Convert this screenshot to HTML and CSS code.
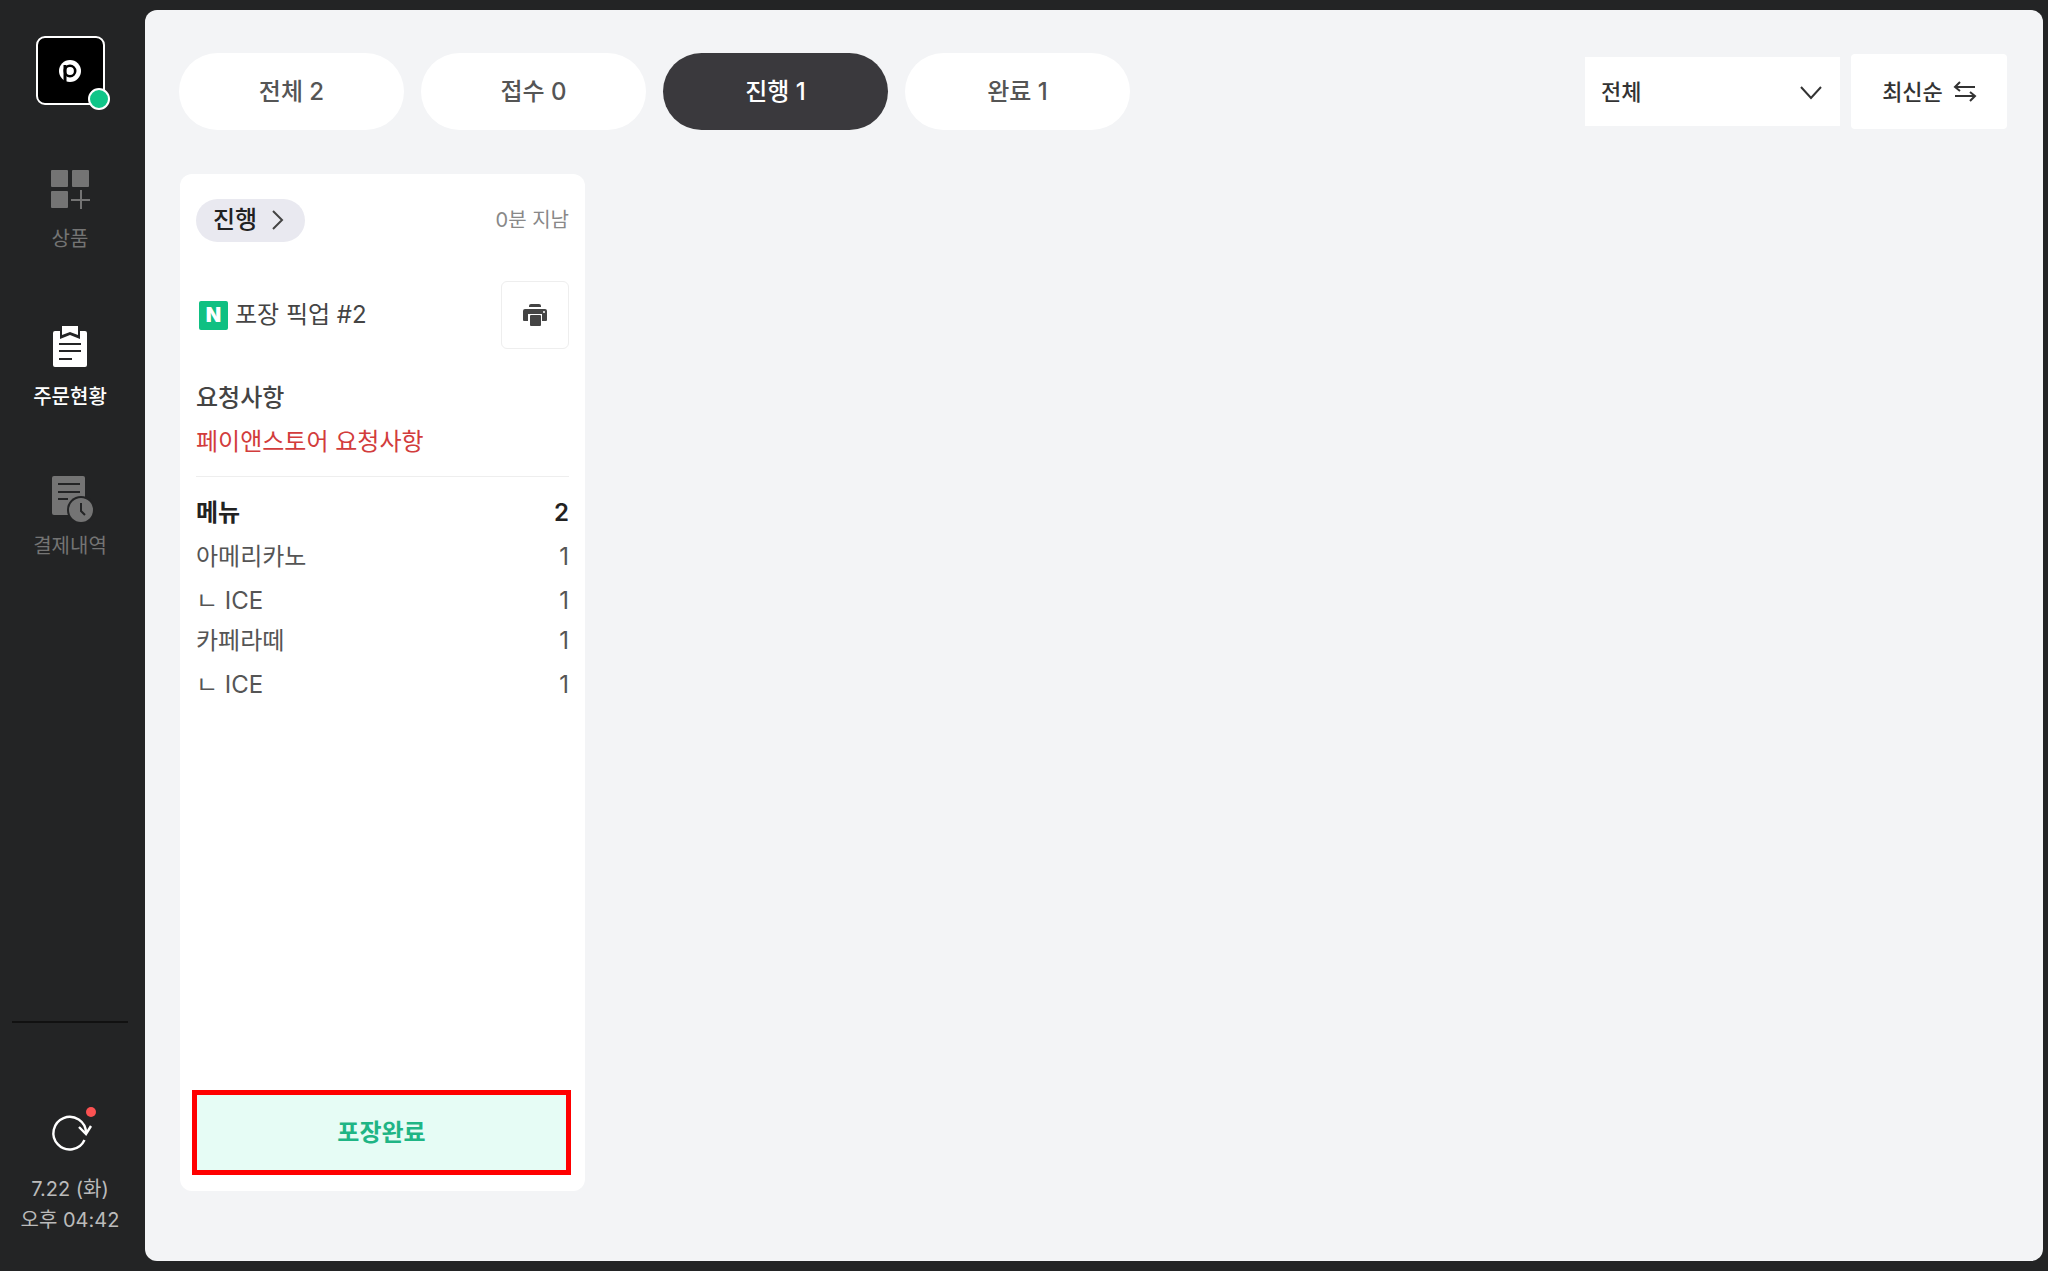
FILE: index.html
```html
<!DOCTYPE html>
<html lang="ko">
<head>
    <meta charset="UTF-8">
    <meta name="viewport" content="width=device-width, initial-scale=1.0">
    <title>주문현황</title>
    <link rel="stylesheet" href="styles.css">
</head>
<body>
    <div class="app">
        <aside class="sidebar">
            <a href="#" class="logo" aria-label="홈">
                <svg width="24" height="24" viewBox="0 0 24 24">
                    <circle cx="12" cy="12" r="11" fill="#fff"/>
                    <circle cx="12" cy="12" r="5.2" fill="none" stroke="#000" stroke-width="2.6"/>
                    <rect x="5.5" y="6" width="3" height="17" fill="#000"/>
                </svg>
                <span class="status-dot"></span>
            </a>

            <nav class="nav-menu">
                <a href="#" class="nav-link">
                    <svg width="42" height="44" viewBox="0 0 42 44">
                        <g fill="#747474">
                            <rect x="2" y="2" width="17" height="17" rx="1"/>
                            <rect x="23" y="2" width="17" height="17" rx="1"/>
                            <rect x="2" y="23" width="17" height="17" rx="1"/>
                        </g>
                        <path d="M32 22v19M22 32h19" stroke="#747474" stroke-width="2"/>
                    </svg>
                    <span>상품</span>
                </a>
                <a href="#" class="nav-link active">
                    <svg width="42" height="51" viewBox="0 -5 42 51">
                        <path d="M6 7h5v8l10-4 10 4V7h5a2 2 0 0 1 2 2v32a2 2 0 0 1-2 2H6a2 2 0 0 1-2-2V9a2 2 0 0 1 2-2z" fill="#fff"/>
                        <path d="M13 2h16v9l-8-3-8 3z" fill="#fff"/>
                        <path d="M10 20h22M10 27h22M10 35h13" stroke="#232425" stroke-width="2"/>
                    </svg>
                    <span>주문현황</span>
                </a>
                <a href="#" class="nav-link">
                    <svg width="42" height="42" viewBox="0 2 42 42">
                        <rect x="3" y="1" width="33" height="39" rx="2" fill="#747474"/>
                        <path d="M9 9h22M9 17h22M9 24h10" stroke="#232425" stroke-width="2"/>
                        <circle cx="32" cy="35" r="14" fill="#232425"/>
                        <circle cx="32" cy="35" r="12" fill="#747474"/>
                        <path d="M32 28v8l4 4" fill="none" stroke="#232425" stroke-width="2"/>
                    </svg>
                    <span>결제내역</span>
                </a>
            </nav>

            <div class="sidebar-footer">
                <button type="button" class="refresh-button" aria-label="새로고침">
                    <svg width="46" height="46" viewBox="0 0 46 46" fill="none" stroke="#fff" stroke-width="2.4">
                        <path d="M37.500 30a16.300 16.300 0 1 1 1.500-7"/>
                        <path d="M32 17l7 7 5-8"/>
                        <circle cx="44" cy="2" r="5" fill="#fb5252" stroke="none"/>
                    </svg>
                </button>
                <p class="clock">7.22 (화)<br>오후 04:42</p>
            </div>
        </aside>

        <main class="main">
            <div class="toolbar">
                <div class="tabs">
                    <button type="button" class="tab">전체 2</button>
                    <button type="button" class="tab">접수 0</button>
                    <button type="button" class="tab active">진행 1</button>
                    <button type="button" class="tab">완료 1</button>
                </div>
                <div class="filters">
                    <div class="select-box">
                        <select class="filter-select" aria-label="주문 유형">
                            <option>전체</option>
                        </select>
                        <svg class="select-arrow" width="24" height="16" viewBox="0 0 24 16" fill="none" stroke="#333" stroke-width="2">
                            <path d="M2 2l10 11L22 2"/>
                        </svg>
                    </div>
                    <button type="button" class="sort-button">
                        최신순
                        <svg width="22" height="22" viewBox="0 0 22 22" fill="none" stroke="#333" stroke-width="2">
                            <path d="M21 6H1M6 1L1 6l5 4M1 15h20M16 11l5 4-5 5"/>
                        </svg>
                    </button>
                </div>
            </div>

            <div class="orders">
                <article class="order-card">
                    <div class="card-row card-header">
                        <button type="button" class="state-button">
                            진행
                            <svg width="14" height="20" viewBox="0 0 14 20" fill="none" stroke="#444" stroke-width="2">
                                <path d="M2 1l9 9-9 9"/>
                            </svg>
                        </button>
                        <span class="elapsed">0분 지남</span>
                    </div>

                    <div class="card-row card-title">
                        <h2><span class="naver-icon">N</span>포장 픽업 #2</h2>
                        <button type="button" class="print-button" aria-label="인쇄">
                            <svg width="26" height="24" viewBox="0 0 26 24" fill="#444">
                                <path d="M9 1h8a2 2 0 0 1 2 2v1H7V3a2 2 0 0 1 2-2z"/>
                                <path d="M3 6h20a2 2 0 0 1 2 2v9a1 1 0 0 1-1 1h-4v-7H6v7H2a1 1 0 0 1-1-1V8a2 2 0 0 1 2-2z"/>
                                <rect x="8" y="12" width="11" height="11" rx="1"/>
                                <circle cx="22" cy="9" r="1" fill="#fff"/>
                            </svg>
                        </button>
                    </div>

                    <div class="request">
                        <h3>요청사항</h3>
                        <p>페이앤스토어 요청사항</p>
                    </div>

                    <table class="menu-table">
                        <thead>
                            <tr><th>메뉴</th><th class="count">2</th></tr>
                        </thead>
                        <tbody>
                            <tr><td>아메리카노</td><td class="count">1</td></tr>
                            <tr class="option"><td>ㄴ ICE</td><td class="count">1</td></tr>
                            <tr><td>카페라떼</td><td class="count">1</td></tr>
                            <tr class="option"><td>ㄴ ICE</td><td class="count">1</td></tr>
                        </tbody>
                    </table>

                    <button type="button" class="complete-button">포장완료</button>
                </article>
            </div>
        </main>
    </div>
</body>
</html>
```
FILE: styles.css
```css
/* General Styles */
* {
    box-sizing: border-box;
}

body {
    margin: 0;
    background-color: #232425;
    color: #444;
    font-family: Inter, 'Noto Sans CJK KR', sans-serif;
    font-size: 24px;
    line-height: 44px;
}

h2, h3, p {
    margin: 0;
    font-size: 24px;
}

button, select {
    font: inherit;
    color: inherit;
    border: none;
    padding: 0;
    cursor: pointer;
}

svg {
    display: block;
    overflow: visible;
}

.app {
    display: flex;
    min-height: 100vh;
    padding: 10px 5px 10px 0;
    gap: 5px;
}

/* Sidebar */
.sidebar {
    display: flex;
    flex-direction: column;
    align-items: center;
    width: 140px;
    padding: 26px 12px 25px;
}

.logo {
    position: relative;
    display: flex;
    align-items: center;
    justify-content: center;
    width: 69px;
    height: 69px;
    border: 2px solid #fff;
    border-radius: 9px;
    background: #000;
}

.status-dot {
    position: absolute;
    right: -7px;
    bottom: -7px;
    width: 22px;
    height: 22px;
    border: 2px solid #fff;
    border-radius: 50%;
    background: #0fc588;
}

.nav-menu {
    display: flex;
    flex-direction: column;
    gap: 65px;
    margin-top: 63px;
}

.nav-link {
    display: flex;
    flex-direction: column;
    align-items: center;
    gap: 12px;
    color: #747474;
    font-size: 20px;
    line-height: 30px;
    text-decoration: none;
}

.nav-link.active {
    color: #fff;
    font-weight: 500;
}

.sidebar-footer {
    width: 100%;
    margin-top: auto;
    padding-top: 87px;
    border-top: 2px solid #111;
    text-align: center;
}

.refresh-button {
    background: none;
}

.clock {
    margin-top: 4px;
    color: #bbb;
    font-size: 20px;
    line-height: 31px;
    white-space: nowrap;
}

/* Main Content */
.main {
    flex: 1;
    display: flex;
    flex-direction: column;
    gap: 44px;
    padding: 43px 36px 70px 34px;
    border-radius: 12px;
    background: #f3f4f6;
}

.toolbar {
    display: flex;
    align-items: center;
    justify-content: space-between;
}

.tabs {
    display: flex;
    gap: 17px;
}

.tab {
    width: 225px;
    height: 77px;
    border-radius: 39px;
    background: #fff;
    color: #555;
    font-weight: 500;
}

.tab.active {
    background: #3a393d;
    color: #fff;
}

.filters {
    display: flex;
    align-items: center;
    gap: 11px;
    color: #333;
    font-size: 22px;
    font-weight: 500;
}

.select-box {
    position: relative;
}

.filter-select {
    appearance: none;
    width: 255px;
    height: 69px;
    padding: 0 16px;
    background: #fff;
}

.select-arrow {
    position: absolute;
    top: 28px;
    right: 17px;
    pointer-events: none;
}

.sort-button {
    display: flex;
    align-items: center;
    justify-content: center;
    gap: 11px;
    width: 156px;
    height: 75px;
    border-radius: 4px;
    background: #fff;
}

/* Order Cards */
.orders {
    flex: 1;
    display: flex;
    gap: 16px;
    padding-left: 1px;
}

.order-card {
    display: flex;
    flex-direction: column;
    width: 405px;
    padding: 24px 14px 16px 12px;
    border-radius: 12px;
    background: #fff;
}

.card-row {
    display: flex;
    align-items: center;
    justify-content: space-between;
    padding: 0 2px 0 4px;
}

.state-button {
    display: flex;
    align-items: center;
    gap: 14px;
    height: 43px;
    padding: 0 20px 0 17px;
    border-radius: 22px;
    background: #e9e9f0;
    color: #222;
    font-weight: 500;
}

.elapsed {
    color: #888;
    font-size: 20px;
}

.card-title {
    margin-top: 39px;
}

.card-title h2 {
    display: flex;
    align-items: center;
    gap: 7px;
    padding-left: 3px;
    font-weight: 400;
}

.naver-icon {
    width: 29px;
    height: 29px;
    border-radius: 2px;
    background: #0fc082;
    color: #fff;
    font-size: 20px;
    font-weight: 900;
    line-height: 29px;
    text-align: center;
}

.print-button {
    display: flex;
    align-items: center;
    justify-content: center;
    width: 68px;
    height: 68px;
    border: 1px solid #eee;
    border-radius: 6px;
    background: #fff;
}

.request {
    margin: 27px 2px 0 4px;
    padding-bottom: 12px;
    border-bottom: 1px solid #eee;
}

.request h3 {
    font-weight: 500;
}

.request p {
    color: #d23c3c;
}

.menu-table {
    margin: 14px 2px 0 4px;
    border-collapse: collapse;
    color: #555;
    line-height: 40px;
}

.menu-table th,
.menu-table td {
    padding: 0;
    text-align: left;
}

.menu-table th {
    padding: 2px 0 4px;
    color: #222;
    font-weight: 600;
}

.menu-table .option td {
    padding-top: 4px;
}

.menu-table th.count,
.menu-table td.count {
    text-align: right;
}

.complete-button {
    height: 85px;
    margin-top: auto;
    border: 5px solid #f00;
    background: #e6fcf5;
    color: #1fb585;
    font-weight: 600;
}
```
